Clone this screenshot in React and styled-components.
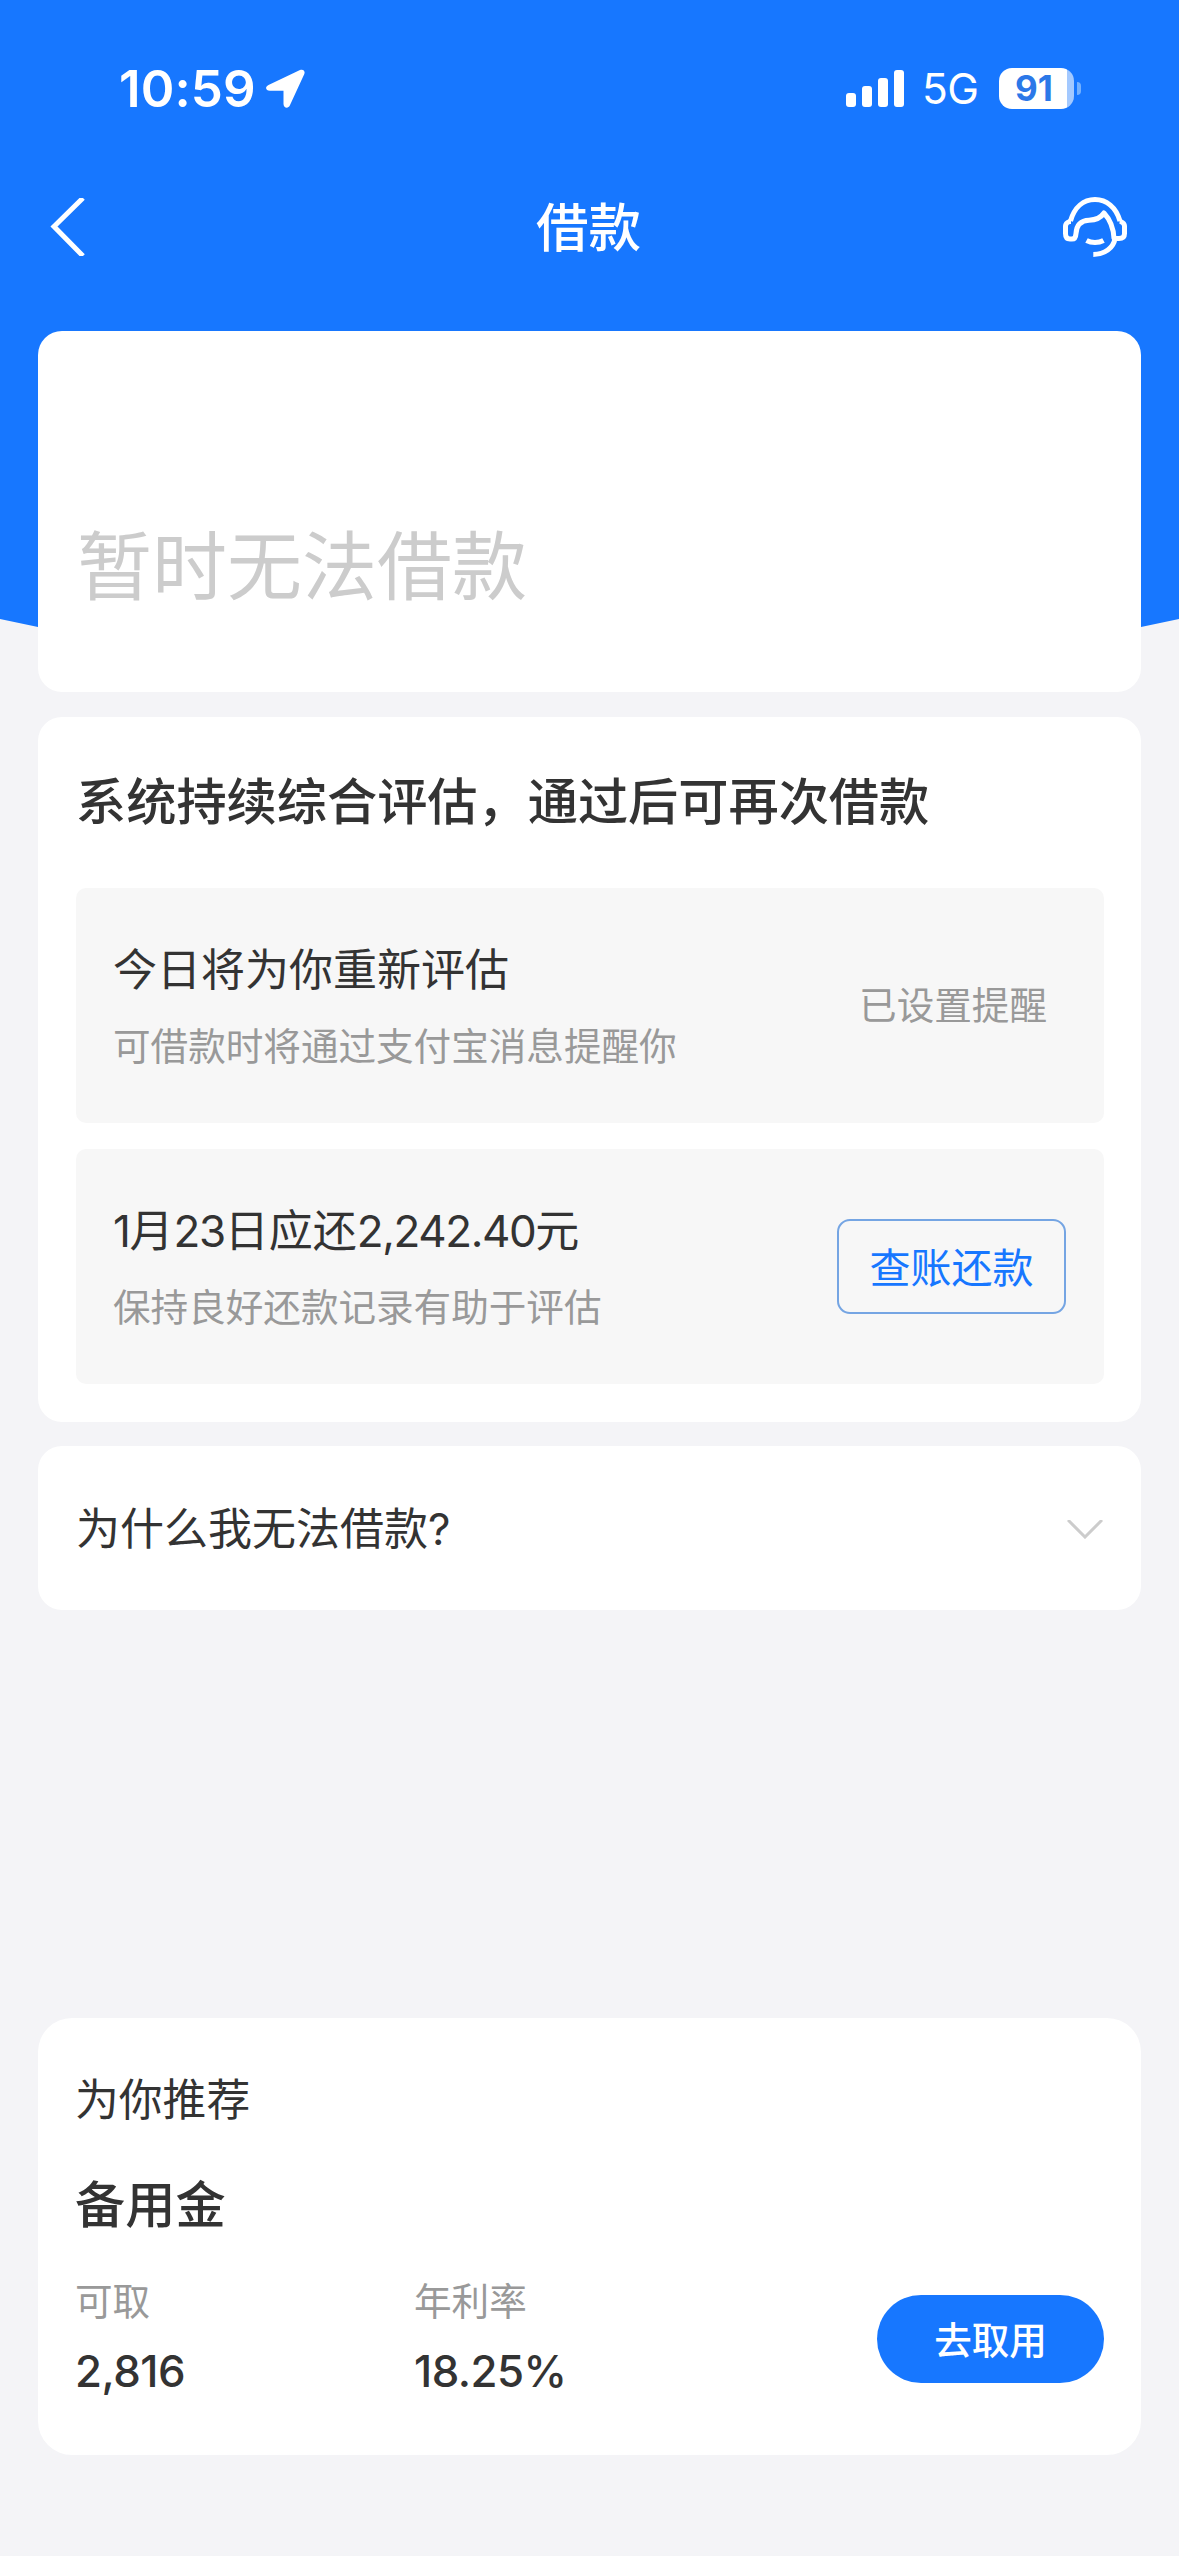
// src/App.jsx

import React, { useState } from 'react';
import styled, { createGlobalStyle } from 'styled-components';

const notices = [
  {
    title: '今日将为你重新评估',
    desc: '可借款时将通过支付宝消息提醒你',
    status: '已设置提醒',
  },
  {
    title: '1月23日应还2,242.40元',
    desc: '保持良好还款记录有助于评估',
    action: '查账还款',
  },
];

const stats = [
  { label: '可取', value: '2,816' },
  { label: '年利率', value: '18.25%' },
];

const bars = [14, 21, 29, 37];

// digits are set a little tighter than the characters around them
const formatTitle = (title) =>
  title.split(/([\d,.]+)/).map((part, i) => (i % 2 ? <Digits key={i}>{part}</Digits> : part));

const App = () => {
  const [open, setOpen] = useState(false);

  return (
    <Page>
      <GlobalStyle />
      <StatusBar>
        <Time>10:59</Time>
        <svg width="41" height="41" viewBox="0 0 41 41">
          <path
            d="M3.500 17 35 2C38.200.700 40.600 3 39.200 6.200L24.800 37.500C23.200 41 18.500 40 18.500 36V22.700H5C.500 22.700-.300 18.800 3.500 17Z"
            fill="#fff"
          />
        </svg>
        <Signal>
          {bars.map((height) => (
            <Bar key={height} $height={height} />
          ))}
        </Signal>
        <Network>5G</Network>
        <Battery>91</Battery>
        <BatteryCap />
      </StatusBar>

      <NavBar>
        <svg width="36" height="58" viewBox="0 0 36 58">
          <path d="M34 0 5 28.500 34 58" fill="none" stroke="#fff" strokeWidth="5" />
        </svg>
        <NavTitle>借款</NavTitle>
        <svg width="66" height="62" viewBox="0 0 66 62" fill="none" stroke="#fff" strokeWidth="5">
          <path d="M8.500 25C12.500 11 21.500 3.600 33 3.600S54 11 58 25" />
          <path
            d="M9 25.500H7.500Q3.500 27 3.500 30V37.500Q3.500 43 8 43H10Q13.700 43 14 37.500C14.500 29 19 24.500 27 24.200C34 24 39 21.500 42 17C48.500 24 51.500 31 52 42.500H57Q62.500 42.500 62.500 37.500V30Q62.500 27 58.500 25.500H57.500"
            strokeLinejoin="round"
          />
          <path d="M53 42.500C51.500 52 42.500 58.400 31.300 58.400" />
          <path d="M24.500 44.500C29.500 47.300 36.500 47.300 41.500 44.500" />
        </svg>
      </NavBar>

      <Content>
        <LimitCard>暂时无法借款</LimitCard>

        <ReviewCard>
          <Heading>系统持续综合评估，通过后可再次借款</Heading>
          {notices.map((item) => (
            <Notice key={item.title}>
              <div>
                <NoticeTitle>{formatTitle(item.title)}</NoticeTitle>
                <NoticeDesc>{item.desc}</NoticeDesc>
              </div>
              {item.status && <NoticeStatus>{item.status}</NoticeStatus>}
              {item.action && <OutlineButton>{item.action}</OutlineButton>}
            </Notice>
          ))}
        </ReviewCard>

        <FaqCard onClick={() => setOpen(!open)}>
          <FaqTitle>为什么我无法借款?</FaqTitle>
          <Chevron $open={open} width="36" height="19" viewBox="0 0 36 19">
            <path d="M1 0 18 17 35 0" fill="none" stroke="#ccc" strokeWidth="3" />
          </Chevron>
        </FaqCard>

        <RecommendCard>
          <RecommendLabel>为你推荐</RecommendLabel>
          <ProductName>备用金</ProductName>
          <ProductRow>
            {stats.map((stat) => (
              <Stat key={stat.label}>
                <StatLabel>{stat.label}</StatLabel>
                <StatValue>{stat.value}</StatValue>
              </Stat>
            ))}
            <PillButton>去取用</PillButton>
          </ProductRow>
        </RecommendCard>
      </Content>
    </Page>
  );
};

export default App;

// Styled Components
const GlobalStyle = createGlobalStyle`
  * {
    box-sizing: border-box;
  }

  body {
    margin: 0;
    background: #f4f4f7;
  }

  button {
    font-family: inherit;
    padding: 0;
    cursor: pointer;
  }
`;

const Page = styled.div`
  position: relative;
  width: 1179px;
  height: 2556px;
  overflow: hidden;
  background: #f4f4f7;
  color: #333;
  font-family: Inter, 'Noto Sans CJK SC', sans-serif;

  /* blue backdrop with a curved lower edge, sits under the first card */
  &::before {
    content: '';
    position: absolute;
    inset: 0 0 auto;
    height: 660px;
    background: #1777ff;
    clip-path: polygon(0 0, 100% 0, 100% 619px, 1141px 627px, 900px 660px, 279px 660px, 38px 627px, 0 619px);
  }
`;

const StatusBar = styled.div`
  position: relative;
  display: flex;
  align-items: center;
  height: 177px;
  padding: 0 98px 0 119px;
  color: #fff;

  svg {
    margin-left: 11px;
  }
`;

const Time = styled.div`
  width: 135px;
  font-size: 51px;
  font-weight: 600;
  letter-spacing: 0.1px;
  white-space: nowrap;
`;

const Signal = styled.div`
  display: flex;
  align-items: flex-end;
  gap: 6px;
  height: 37px;
  margin-left: auto;
`;

const Bar = styled.div`
  width: 10px;
  height: ${({ $height }) => $height}px;
  border-radius: 3px;
  background: #fff;
`;

const Network = styled.div`
  width: 57px;
  margin-left: 18px;
  font-size: 42.5px;
  letter-spacing: -0.5px;
`;

const Battery = styled.div`
  width: 75px;
  height: 41px;
  margin-left: 20px;
  padding-right: 5px;
  border-radius: 13px;
  background: linear-gradient(to right, #fff 68px, #a3c9ff 68px);
  color: #2b78e8;
  font-size: 35px;
  font-weight: 700;
  line-height: 41px;
  text-align: center;
`;

const BatteryCap = styled.div`
  width: 4px;
  height: 13px;
  margin-left: 3px;
  border-radius: 0 6px 6px 0;
  background: #74b1ff;
`;

const NavBar = styled.div`
  position: relative;
  display: flex;
  align-items: center;
  justify-content: space-between;
  height: 100px;
  padding: 0 51px 0 49px;
`;

const NavTitle = styled.div`
  padding: 0 0 7px 30px;
  color: #fff;
  font-size: 52.5px;
  font-weight: 500;
`;

const Content = styled.div`
  position: relative;
  padding: 54px 38px 0;
`;

const Card = styled.div`
  border-radius: 24px;
  background: #fff;
`;

const LimitCard = styled(Card)`
  height: 361px;
  padding: 181px 39px 0;
  color: #ccc;
  font-size: 75px;
  line-height: 110px;
`;

const ReviewCard = styled(Card)`
  height: 705px;
  margin-top: 25px;
  padding: 50px 37px 0 38px;
`;

const Heading = styled.div`
  margin-bottom: 51px;
  font-size: 50.2px;
  font-weight: 500;
  line-height: 70px;
  white-space: nowrap;
`;

const Notice = styled.div`
  display: flex;
  align-items: center;
  justify-content: space-between;
  height: 235px;
  padding: 0 38px 0 37px;
  border-radius: 10px;
  background: #f7f7f7;

  & + & {
    margin-top: 26px;
  }
`;

const NoticeTitle = styled.div`
  font-size: 44px;
  line-height: 66px;
`;

const Digits = styled.span`
  letter-spacing: -1.4px;
`;

const NoticeDesc = styled.div`
  margin-top: 16px;
  color: #999;
  font-size: 37.6px;
  line-height: 56px;
`;

const NoticeStatus = styled.div`
  padding: 0 19px 7px 0;
  color: #999;
  font-size: 37.6px;
`;

const OutlineButton = styled.button`
  width: 229px;
  height: 95px;
  padding-bottom: 4px;
  border: 2px solid #75a5e3;
  border-radius: 13px;
  background: transparent;
  color: #1777ff;
  font-size: 41px;
`;

const FaqCard = styled(Card)`
  display: flex;
  align-items: center;
  justify-content: space-between;
  height: 164px;
  margin-top: 24px;
  padding: 0 38px;
`;

const FaqTitle = styled.div`
  padding-bottom: 4px;
  font-size: 44px;
`;

const Chevron = styled.svg`
  margin-top: 2px;
  transform: ${({ $open }) => ($open ? 'rotate(180deg)' : 'none')};
`;

const RecommendCard = styled(Card)`
  height: 437px;
  margin-top: 408px;
  padding: 53px 37px 0;
  border-radius: 34px;
`;

const RecommendLabel = styled.div`
  font-size: 43.8px;
  line-height: 60px;
`;

const ProductName = styled.div`
  margin-top: 39px;
  font-size: 50.2px;
  font-weight: 500;
  line-height: 70px;
`;

const ProductRow = styled.div`
  display: flex;
  align-items: center;
  margin-top: 34px;
`;

const Stat = styled.div`
  width: 339px;
`;

const StatLabel = styled.div`
  color: #999;
  font-size: 37.6px;
  line-height: 56px;
`;

const StatValue = styled.div`
  margin-top: 12px;
  font-size: 43.8px;
  font-weight: 500;
  line-height: 60px;
  letter-spacing: -0.5px;
`;

const PillButton = styled.button`
  width: 227px;
  height: 88px;
  margin: 2px 0 0 auto;
  padding-bottom: 4px;
  border: none;
  border-radius: 44px;
  background: #1777ff;
  color: #fff;
  font-size: 37.6px;
  font-weight: 500;
`;
